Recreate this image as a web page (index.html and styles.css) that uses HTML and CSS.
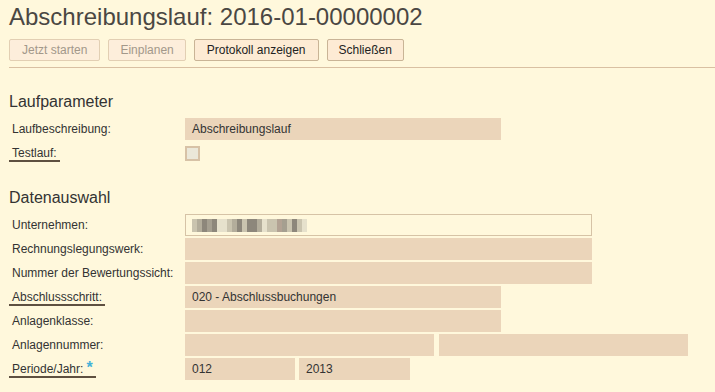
FILE: index.html
```html
<!DOCTYPE html>
<html lang="de">
<head>
    <meta charset="UTF-8">
    <title>Abschreibungslauf</title>
    <link rel="stylesheet" href="styles.css">
</head>
<body>
    <div class="page">
        <h1 class="title">Abschreibungslauf: 2016-01-00000002</h1>

        <div class="toolbar">
            <button class="btn btn-wide" disabled>Jetzt starten</button>
            <button class="btn" disabled>Einplanen</button>
            <button class="btn btn-wide">Protokoll anzeigen</button>
            <button class="btn">Schließen</button>
        </div>
        <div class="divider"></div>

        <h2 class="group-title">Laufparameter</h2>
        <div class="rows">
            <div class="row">
                <div class="lbl"><span>Laufbeschreibung:</span></div>
                <div class="field w-md">Abschreibungslauf</div>
            </div>
            <div class="row">
                <div class="lbl"><span class="lbl-link">Testlauf:</span></div>
                <span class="checkbox"></span>
            </div>
        </div>

        <h2 class="group-title">Datenauswahl</h2>
        <div class="rows">
            <div class="row">
                <div class="lbl"><span>Unternehmen:</span></div>
                <div class="field field-open w-lg">
                    <!-- company name is pixelated in the source -->
                    <span class="mosaic">
                        <i class="s2"></i><i class="s3"></i><i class="s5"></i><i class="s4"></i><i class="s5"></i>
                        <i class="s1"></i><i class="s1"></i><i class="s2"></i><i class="s3"></i><i class="s5"></i>
                        <i class="s2"></i><i class="s5"></i><i class="s5"></i><i class="s3"></i><i class="s1"></i>
                        <i class="s2"></i><i class="s2"></i><i class="s6"></i><i class="s4"></i><i class="s2"></i>
                        <i class="s5"></i><i class="s2"></i><i class="s1"></i>
                    </span>
                </div>
            </div>
            <div class="row">
                <div class="lbl"><span>Rechnungslegungswerk:</span></div>
                <div class="field w-lg"></div>
            </div>
            <div class="row">
                <div class="lbl"><span>Nummer der Bewertungssicht:</span></div>
                <div class="field w-lg"></div>
            </div>
            <div class="row">
                <div class="lbl"><span class="lbl-link">Abschlussschritt:</span></div>
                <div class="field w-md">020 - Abschlussbuchungen</div>
            </div>
            <div class="row">
                <div class="lbl"><span>Anlagenklasse:</span></div>
                <div class="field w-md"></div>
            </div>
            <div class="row">
                <div class="lbl"><span>Anlagennummer:</span></div>
                <div class="pair pair-wide">
                    <div class="field w-half"></div>
                    <div class="field w-half"></div>
                </div>
            </div>
            <div class="row">
                <div class="lbl"><span class="lbl-link">Periode/Jahr:<span class="req">*</span></span></div>
                <div class="pair">
                    <div class="field w-sm">012</div>
                    <div class="field w-sm2">2013</div>
                </div>
            </div>
        </div>
    </div>
</body>
</html>
```

FILE: styles.css
```css
body {
    margin: 0;
    background: #fff8dc;
    font-family: "Liberation Sans", Arial, sans-serif;
    color: #333;
}
.page {
    padding-left: 9px;
}
.title {
    margin: 3px 0 0;
    font-size: 24px;
    line-height: 28px;
    font-weight: normal;
    color: #4a4743;
}
.toolbar {
    display: flex;
    gap: 8px;
    margin-top: 8px;
}
.btn {
    height: 22px;
    padding: 0 11px;
    font-family: inherit;
    font-size: 12px;
    color: #222;
    background: #fdebd4;
    border: 1px solid #c9b496;
    border-radius: 2px;
}
.btn-wide {
    padding: 0 12px;
}
.btn:disabled {
    color: #a2988a;
    background: #fdeedb;
    border-color: #e2cfb3;
}
.divider {
    height: 1px;
    margin-top: 6px;
    background: #d9c0a2;
}
.group-title {
    margin: 25px 0 7px;
    font-size: 16px;
    line-height: 18px;
    font-weight: normal;
    color: #333;
}
.rows {
    display: flex;
    flex-direction: column;
    gap: 2px;
}
.row {
    display: flex;
    align-items: center;
    height: 22px;
}
.lbl {
    width: 176px;
    flex-shrink: 0;
    font-size: 12px;
    line-height: 14px;
}
.lbl span {
    display: inline-block;
    padding: 0 3px;
}
.lbl .lbl-link {
    padding-top: 2px;
    border-bottom: 2px solid #5e5040;
}
.lbl .req {
    padding: 0;
    margin-left: 3px;
    color: #45b2d8;
    font-weight: bold;
    font-size: 16px;
    line-height: 10px;
}
.field {
    box-sizing: border-box;
    height: 22px;
    padding-left: 7px;
    font-size: 12px;
    line-height: 22px;
    color: #333;
    background: #ebd5ba;
}
.field-open {
    background: transparent;
    border: 1px solid #d6c3a6;
    padding-left: 6px;
    display: flex;
    align-items: center;
}
.w-md { width: 316px; }
.w-lg { width: 407px; }
.w-half { width: 249px; }
.w-sm { width: 110px; }
.w-sm2 { width: 111px; }
.pair {
    display: flex;
    gap: 4px;
}
.pair-wide {
    gap: 5px;
}
.checkbox {
    box-sizing: border-box;
    width: 15px;
    height: 15px;
    background: #ebe8d9;
    border: 2px solid #d7c2a6;
}
.mosaic {
    display: flex;
    height: 13px;
}
.mosaic i {
    width: 5px;
    height: 13px;
}
.s1 { background: #e6e1cc; }
.s2 { background: #cac4af; }
.s3 { background: #b3ad9b; }
.s4 { background: #a59f90; }
.s5 { background: #8d877b; }
.s6 { background: #b2a293; }
```
